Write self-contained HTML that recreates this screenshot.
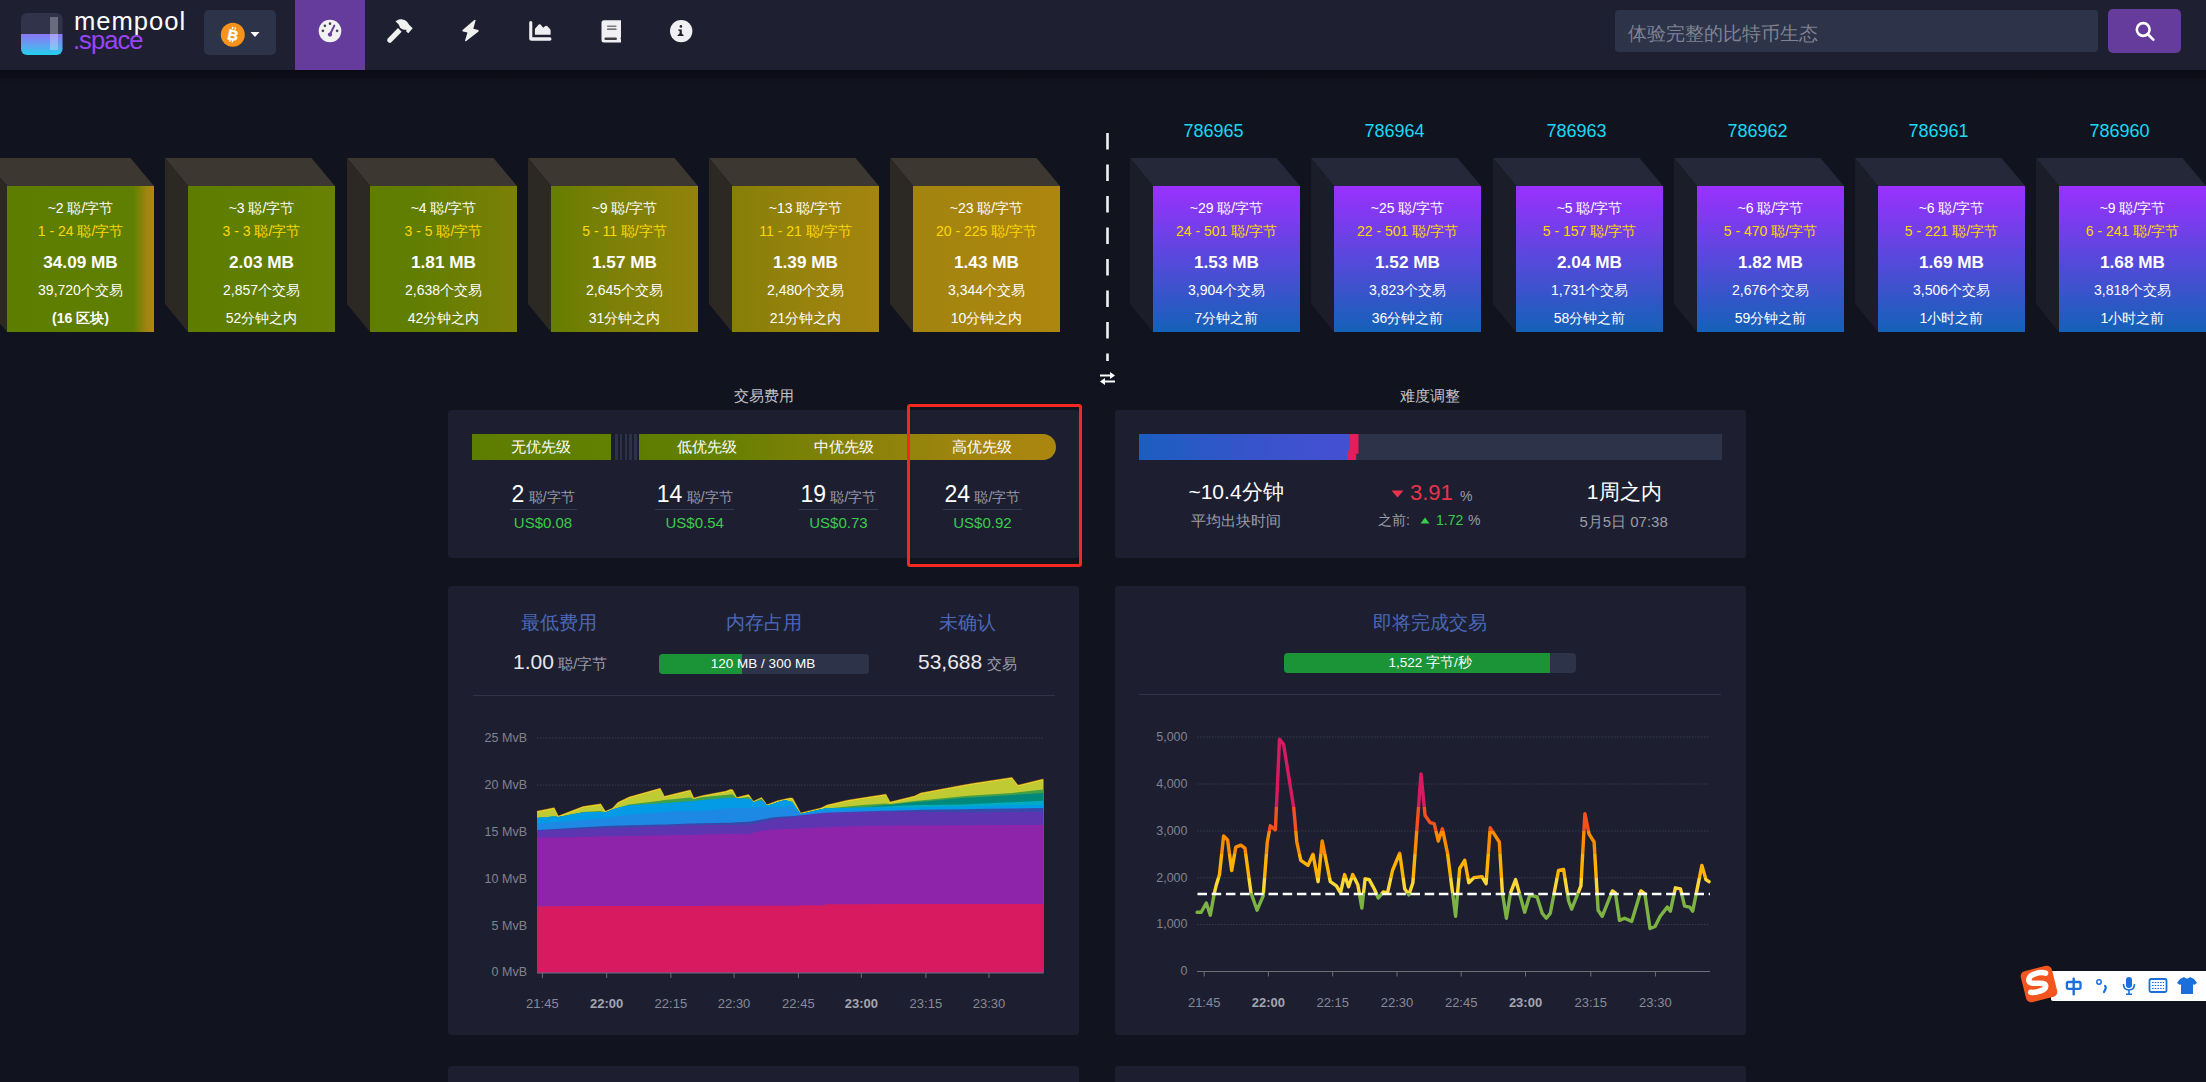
<!DOCTYPE html><html><head><meta charset="utf-8"><style>
*{margin:0;padding:0;box-sizing:border-box}
html,body{width:2206px;height:1082px;overflow:hidden;background:#11131f;font-family:"Liberation Sans",sans-serif;color:#fff}
.a{position:absolute}
.c{position:absolute;text-align:center;white-space:nowrap;line-height:1}
.card{position:absolute;background:#1d1f31;border-radius:3.5px}
</style></head><body>
<div class="a" style="left:0;top:0;width:2206px;height:70px;background:#1e2032"></div><div class="a" style="left:0;top:70px;width:2206px;height:18px;background:linear-gradient(#0a0b15 0%,#0c0d18 40%,#0f111c 55%,#11131f 100%)"></div><svg class="a" style="left:21px;top:13px" width="42" height="42" viewBox="0 0 42 42">
<defs><linearGradient id="lg" x1="0" y1="0" x2="0" y2="1"><stop offset="0" stop-color="#8b76f7"/><stop offset="0.6" stop-color="#5aa7f0"/><stop offset="1" stop-color="#1fd2ee"/></linearGradient>
<clipPath id="lc"><rect x="0" y="0" width="41.5" height="42" rx="6"/></clipPath></defs>
<g clip-path="url(#lc)"><rect x="0" y="0" width="42" height="21" fill="#31334b"/><rect x="0" y="21" width="42" height="21" fill="url(#lg)"/>
<rect x="29" y="4" width="8" height="33" fill="#ffffff" opacity="0.28"/></g></svg><div class="a" style="left:74px;top:9.3px;font-size:25.6px;line-height:25.6px;font-weight:normal;color:#fff;letter-spacing:1px">mempool</div><div class="a" style="left:73px;top:28.3px;font-size:25.6px;line-height:25.6px;color:#9a45f5;letter-spacing:-1px">.space</div><div class="a" style="left:204px;top:10px;width:72px;height:45px;background:#2d3348;border-radius:5px"></div><svg class="a" style="left:220px;top:22px" width="26" height="26" viewBox="0 0 26 26"><circle cx="12.8" cy="12.7" r="12" fill="#f7931a"/>
<g transform="rotate(12 12.8 12.7)"><text x="13" y="18.1" text-anchor="middle" font-family="Liberation Sans" font-weight="bold" font-size="14.5" fill="#fff" stroke="#fff" stroke-width="0.5">B</text><rect x="10.6" y="5" width="1.3" height="2.4" fill="#fff"/><rect x="13.2" y="5" width="1.3" height="2.4" fill="#fff"/><rect x="10.6" y="18" width="1.3" height="2.4" fill="#fff"/><rect x="13.2" y="18" width="1.3" height="2.4" fill="#fff"/></g></svg><svg class="a" style="left:250px;top:31px" width="10" height="7"><path d="M0.5 1 L9.5 1 L5 6 Z" fill="#fff"/></svg><div class="a" style="left:295px;top:0;width:70px;height:70px;background:#653b9c"></div><svg class="a" style="left:318px;top:19px" width="24" height="24" viewBox="0 0 24 24">
<circle cx="12" cy="12" r="11.3" fill="#f2f2f2"/>
<circle cx="12" cy="4.7" r="1.35" fill="#4b4658"/><circle cx="6.9" cy="6.8" r="1.35" fill="#4b4658"/><circle cx="4.9" cy="11.8" r="1.35" fill="#4b4658"/><circle cx="19.1" cy="11.8" r="1.35" fill="#4b4658"/>
<path d="M16.3 6.6 L12.2 15" stroke="#653b9c" stroke-width="2" stroke-linecap="round"/><circle cx="12" cy="15.6" r="2.1" fill="#653b9c"/></svg><svg class="a" style="left:386px;top:18px" width="28" height="26" viewBox="0 0 28 26">
<path d="M2 20.3 L12 10 L15.7 13.7 L5.6 24 Q3.7 25.8 1.9 24.1 Q0.2 22.3 2 20.3 Z" fill="#f0f0ee"/>
<path d="M9.5 3.5 C11.5 1.8 14 1.2 16.3 1.4 C19.5 1.8 22 4 23.1 6.8 L26.7 10.3 L22.3 15.3 L20.2 13.6 L20.5 11.8 C19 11.8 17.5 11.5 16.3 11.2 L14 9.7 C13.5 8 13 6.8 12.3 6 C11.5 5.2 10.5 4.5 9.5 3.5 Z" fill="#f0f0ee"/></svg><svg class="a" style="left:460px;top:19px" width="21" height="24" viewBox="0 0 21 24">
<path d="M14.3 0.9 Q15.7 0.2 15.5 1.8 L13.3 9.8 L18.2 11.1 Q19.3 11.6 18.5 12.6 L6.3 21.9 Q4.8 22.8 5.1 21.2 L7.5 13.6 L2.9 12.4 Q1.6 12 2.6 11 Z" fill="#f0f0ee"/></svg><svg class="a" style="left:528px;top:20px" width="25" height="22" viewBox="0 0 25 22">
<path d="M1.2 2.4 Q1.2 0.9 2.75 0.9 Q4.3 0.9 4.3 2.4 L4.3 17.2 L21.9 17.2 Q23.5 17.2 23.5 18.95 Q23.5 20.7 21.9 20.7 L3.7 20.7 Q1.2 20.7 1.2 18.2 Z" fill="#efeff2"/>
<path d="M6.9 14.8 L6.9 9.6 Q6.9 8.6 7.6 8 L10.8 4.6 Q11.7 3.8 12.6 4.6 L15.2 7.7 L17.3 6 Q18.2 5.3 19.1 6.1 L22 9 Q22.6 9.8 22.6 10.8 L22.6 14.8 Z" fill="#efeff2"/></svg><svg class="a" style="left:600.5px;top:19.5px" width="22" height="24" viewBox="0 0 22 24">
<path d="M3 0.3 L20 0.3 L20 16.8 Q19.2 18.3 20 19.8 L20 22.6 L3 22.6 Q0.5 22.6 0.5 20.1 L0.5 3 Q0.5 0.3 3 0.3 Z" fill="#f0f0f2"/>
<rect x="6" y="5.4" width="9.6" height="1.5" rx="0.7" fill="#7a7a7e"/><rect x="6" y="8.5" width="9.6" height="1.3" rx="0.6" fill="#4a4a50"/>
<rect x="3.4" y="17.4" width="12.6" height="2.6" rx="1.3" fill="#3e3e44"/></svg><svg class="a" style="left:669px;top:19px" width="24" height="24" viewBox="0 0 24 24">
<circle cx="12.2" cy="12.1" r="11.2" fill="#f0f0f2"/><circle cx="11.9" cy="7.4" r="1.3" fill="#202128"/>
<path d="M9.2 10.4 L12.8 10.4 L12.8 14.3 Q13.2 15.6 14.6 16.1 L14.6 17.1 L8.6 17.1 L8.6 16.1 Q10.2 15.6 10.6 14.3 L10.6 12 Q10 11.7 9.2 11.6 Z" fill="#202128"/></svg><div class="a" style="left:1615px;top:10px;width:483px;height:42px;background:#2d3348;border-radius:4px"></div><div class="a" style="left:1628px;top:23.5px;font-size:18.7px;line-height:20px;color:#7e8293;white-space:nowrap">体验完整的比特币生态</div><div class="a" style="left:2108px;top:9px;width:73px;height:44px;background:#653b9c;border-radius:5px"></div><svg class="a" style="left:2134px;top:20px" width="22" height="22" viewBox="0 0 22 22"><circle cx="9.2" cy="9.5" r="6.4" fill="none" stroke="#fff" stroke-width="2.6"/><path d="M13.9 14.3 L19.3 19.6" stroke="#fff" stroke-width="2.7" stroke-linecap="round"/></svg><svg class="a" style="left:-16px;top:158px" width="170" height="174"><polygon points="0,0 146.5,0 170,28 23,28" fill="#3d3731"/><polygon points="0,0 23,28 23,174 0,146" fill="#2c2824"/></svg><div class="a" style="left:7px;top:186px;width:147px;height:146px;background:linear-gradient(to right,#5d7d01 0%,#5f7f02 86%,#a0840f 95%,#b3860f 100%)"></div><div class="c" style="left:0.5px;width:160px;top:200.6px;font-size:14px;height:14px;color:#fff;font-weight:normal">~2 聪/字节</div><div class="c" style="left:0.5px;width:160px;top:223.9px;font-size:14px;height:14px;color:#ffd800;font-weight:normal">1 - 24 聪/字节</div><div class="c" style="left:0.5px;width:160px;top:254.1px;font-size:17.2px;height:17.2px;color:#fff;font-weight:bold">34.09 MB</div><div class="c" style="left:0.5px;width:160px;top:283.3px;font-size:14px;height:14px;color:#fff;font-weight:normal">39,720个交易</div><div class="c" style="left:0.5px;width:160px;top:310.9px;font-size:14px;height:14px;color:#fff;font-weight:bold">(16 区块)</div><svg class="a" style="left:165px;top:158px" width="170" height="174"><polygon points="0,0 146.5,0 170,28 23,28" fill="#3d3731"/><polygon points="0,0 23,28 23,174 0,146" fill="#2c2824"/></svg><div class="a" style="left:188px;top:186px;width:147px;height:146px;background:linear-gradient(to right,#5d7d01 0%,#607e02 60%,#6a8203 100%)"></div><div class="c" style="left:181.5px;width:160px;top:200.6px;font-size:14px;height:14px;color:#fff;font-weight:normal">~3 聪/字节</div><div class="c" style="left:181.5px;width:160px;top:223.9px;font-size:14px;height:14px;color:#ffd800;font-weight:normal">3 - 3 聪/字节</div><div class="c" style="left:181.5px;width:160px;top:254.1px;font-size:17.2px;height:17.2px;color:#fff;font-weight:bold">2.03 MB</div><div class="c" style="left:181.5px;width:160px;top:283.3px;font-size:14px;height:14px;color:#fff;font-weight:normal">2,857个交易</div><div class="c" style="left:181.5px;width:160px;top:310.9px;font-size:14px;height:14px;color:#fff;font-weight:normal">52分钟之内</div><svg class="a" style="left:347px;top:158px" width="170" height="174"><polygon points="0,0 146.5,0 170,28 23,28" fill="#3d3731"/><polygon points="0,0 23,28 23,174 0,146" fill="#2c2824"/></svg><div class="a" style="left:370px;top:186px;width:147px;height:146px;background:linear-gradient(to right,#5e7d01 0%,#5f7e02 30%,#7c8006 100%)"></div><div class="c" style="left:363.5px;width:160px;top:200.6px;font-size:14px;height:14px;color:#fff;font-weight:normal">~4 聪/字节</div><div class="c" style="left:363.5px;width:160px;top:223.9px;font-size:14px;height:14px;color:#ffd800;font-weight:normal">3 - 5 聪/字节</div><div class="c" style="left:363.5px;width:160px;top:254.1px;font-size:17.2px;height:17.2px;color:#fff;font-weight:bold">1.81 MB</div><div class="c" style="left:363.5px;width:160px;top:283.3px;font-size:14px;height:14px;color:#fff;font-weight:normal">2,638个交易</div><div class="c" style="left:363.5px;width:160px;top:310.9px;font-size:14px;height:14px;color:#fff;font-weight:normal">42分钟之内</div><svg class="a" style="left:528px;top:158px" width="170" height="174"><polygon points="0,0 146.5,0 170,28 23,28" fill="#3d3731"/><polygon points="0,0 23,28 23,174 0,146" fill="#2c2824"/></svg><div class="a" style="left:551px;top:186px;width:147px;height:146px;background:linear-gradient(to right,#657e02 0%,#7b8006 40%,#92830b 100%)"></div><div class="c" style="left:544.5px;width:160px;top:200.6px;font-size:14px;height:14px;color:#fff;font-weight:normal">~9 聪/字节</div><div class="c" style="left:544.5px;width:160px;top:223.9px;font-size:14px;height:14px;color:#ffd800;font-weight:normal">5 - 11 聪/字节</div><div class="c" style="left:544.5px;width:160px;top:254.1px;font-size:17.2px;height:17.2px;color:#fff;font-weight:bold">1.57 MB</div><div class="c" style="left:544.5px;width:160px;top:283.3px;font-size:14px;height:14px;color:#fff;font-weight:normal">2,645个交易</div><div class="c" style="left:544.5px;width:160px;top:310.9px;font-size:14px;height:14px;color:#fff;font-weight:normal">31分钟之内</div><svg class="a" style="left:709px;top:158px" width="170" height="174"><polygon points="0,0 146.5,0 170,28 23,28" fill="#3d3731"/><polygon points="0,0 23,28 23,174 0,146" fill="#2c2824"/></svg><div class="a" style="left:732px;top:186px;width:147px;height:146px;background:linear-gradient(to right,#857f08 0%,#94820c 40%,#a4850f 100%)"></div><div class="c" style="left:725.5px;width:160px;top:200.6px;font-size:14px;height:14px;color:#fff;font-weight:normal">~13 聪/字节</div><div class="c" style="left:725.5px;width:160px;top:223.9px;font-size:14px;height:14px;color:#ffd800;font-weight:normal">11 - 21 聪/字节</div><div class="c" style="left:725.5px;width:160px;top:254.1px;font-size:17.2px;height:17.2px;color:#fff;font-weight:bold">1.39 MB</div><div class="c" style="left:725.5px;width:160px;top:283.3px;font-size:14px;height:14px;color:#fff;font-weight:normal">2,480个交易</div><div class="c" style="left:725.5px;width:160px;top:310.9px;font-size:14px;height:14px;color:#fff;font-weight:normal">21分钟之内</div><svg class="a" style="left:890px;top:158px" width="170" height="174"><polygon points="0,0 146.5,0 170,28 23,28" fill="#3d3731"/><polygon points="0,0 23,28 23,174 0,146" fill="#2c2824"/></svg><div class="a" style="left:913px;top:186px;width:147px;height:146px;background:linear-gradient(to right,#a2840f 0%,#a8850f 50%,#ad860f 100%)"></div><div class="c" style="left:906.5px;width:160px;top:200.6px;font-size:14px;height:14px;color:#fff;font-weight:normal">~23 聪/字节</div><div class="c" style="left:906.5px;width:160px;top:223.9px;font-size:14px;height:14px;color:#ffd800;font-weight:normal">20 - 225 聪/字节</div><div class="c" style="left:906.5px;width:160px;top:254.1px;font-size:17.2px;height:17.2px;color:#fff;font-weight:bold">1.43 MB</div><div class="c" style="left:906.5px;width:160px;top:283.3px;font-size:14px;height:14px;color:#fff;font-weight:normal">3,344个交易</div><div class="c" style="left:906.5px;width:160px;top:310.9px;font-size:14px;height:14px;color:#fff;font-weight:normal">10分钟之内</div><svg class="a" style="left:1130px;top:158px" width="170" height="174"><polygon points="0,0 146.5,0 170,28 23,28" fill="#252839"/><polygon points="0,0 23,28 23,174 0,146" fill="#1b1d28"/></svg><div class="a" style="left:1153px;top:186px;width:147px;height:146px;background:linear-gradient(#9b30fe,#1461b8)"></div><div class="c" style="left:1146.5px;width:160px;top:200.6px;font-size:14px;height:14px;color:#fff;font-weight:normal">~29 聪/字节</div><div class="c" style="left:1146.5px;width:160px;top:223.9px;font-size:14px;height:14px;color:#ffd800;font-weight:normal">24 - 501 聪/字节</div><div class="c" style="left:1146.5px;width:160px;top:254.1px;font-size:17.2px;height:17.2px;color:#fff;font-weight:bold">1.53 MB</div><div class="c" style="left:1146.5px;width:160px;top:283.3px;font-size:14px;height:14px;color:#fff;font-weight:normal">3,904个交易</div><div class="c" style="left:1146.5px;width:160px;top:310.9px;font-size:14px;height:14px;color:#fff;font-weight:normal">7分钟之前</div><div class="c" style="left:1153.5px;width:120px;top:122px;font-size:18px;height:18px;color:#1bd8f4">786965</div><svg class="a" style="left:1311px;top:158px" width="170" height="174"><polygon points="0,0 146.5,0 170,28 23,28" fill="#252839"/><polygon points="0,0 23,28 23,174 0,146" fill="#1b1d28"/></svg><div class="a" style="left:1334px;top:186px;width:147px;height:146px;background:linear-gradient(#9b30fe,#1461b8)"></div><div class="c" style="left:1327.5px;width:160px;top:200.6px;font-size:14px;height:14px;color:#fff;font-weight:normal">~25 聪/字节</div><div class="c" style="left:1327.5px;width:160px;top:223.9px;font-size:14px;height:14px;color:#ffd800;font-weight:normal">22 - 501 聪/字节</div><div class="c" style="left:1327.5px;width:160px;top:254.1px;font-size:17.2px;height:17.2px;color:#fff;font-weight:bold">1.52 MB</div><div class="c" style="left:1327.5px;width:160px;top:283.3px;font-size:14px;height:14px;color:#fff;font-weight:normal">3,823个交易</div><div class="c" style="left:1327.5px;width:160px;top:310.9px;font-size:14px;height:14px;color:#fff;font-weight:normal">36分钟之前</div><div class="c" style="left:1334.5px;width:120px;top:122px;font-size:18px;height:18px;color:#1bd8f4">786964</div><svg class="a" style="left:1493px;top:158px" width="170" height="174"><polygon points="0,0 146.5,0 170,28 23,28" fill="#252839"/><polygon points="0,0 23,28 23,174 0,146" fill="#1b1d28"/></svg><div class="a" style="left:1516px;top:186px;width:147px;height:146px;background:linear-gradient(#9b30fe,#1461b8)"></div><div class="c" style="left:1509.5px;width:160px;top:200.6px;font-size:14px;height:14px;color:#fff;font-weight:normal">~5 聪/字节</div><div class="c" style="left:1509.5px;width:160px;top:223.9px;font-size:14px;height:14px;color:#ffd800;font-weight:normal">5 - 157 聪/字节</div><div class="c" style="left:1509.5px;width:160px;top:254.1px;font-size:17.2px;height:17.2px;color:#fff;font-weight:bold">2.04 MB</div><div class="c" style="left:1509.5px;width:160px;top:283.3px;font-size:14px;height:14px;color:#fff;font-weight:normal">1,731个交易</div><div class="c" style="left:1509.5px;width:160px;top:310.9px;font-size:14px;height:14px;color:#fff;font-weight:normal">58分钟之前</div><div class="c" style="left:1516.5px;width:120px;top:122px;font-size:18px;height:18px;color:#1bd8f4">786963</div><svg class="a" style="left:1674px;top:158px" width="170" height="174"><polygon points="0,0 146.5,0 170,28 23,28" fill="#252839"/><polygon points="0,0 23,28 23,174 0,146" fill="#1b1d28"/></svg><div class="a" style="left:1697px;top:186px;width:147px;height:146px;background:linear-gradient(#9b30fe,#1461b8)"></div><div class="c" style="left:1690.5px;width:160px;top:200.6px;font-size:14px;height:14px;color:#fff;font-weight:normal">~6 聪/字节</div><div class="c" style="left:1690.5px;width:160px;top:223.9px;font-size:14px;height:14px;color:#ffd800;font-weight:normal">5 - 470 聪/字节</div><div class="c" style="left:1690.5px;width:160px;top:254.1px;font-size:17.2px;height:17.2px;color:#fff;font-weight:bold">1.82 MB</div><div class="c" style="left:1690.5px;width:160px;top:283.3px;font-size:14px;height:14px;color:#fff;font-weight:normal">2,676个交易</div><div class="c" style="left:1690.5px;width:160px;top:310.9px;font-size:14px;height:14px;color:#fff;font-weight:normal">59分钟之前</div><div class="c" style="left:1697.5px;width:120px;top:122px;font-size:18px;height:18px;color:#1bd8f4">786962</div><svg class="a" style="left:1855px;top:158px" width="170" height="174"><polygon points="0,0 146.5,0 170,28 23,28" fill="#252839"/><polygon points="0,0 23,28 23,174 0,146" fill="#1b1d28"/></svg><div class="a" style="left:1878px;top:186px;width:147px;height:146px;background:linear-gradient(#9b30fe,#1461b8)"></div><div class="c" style="left:1871.5px;width:160px;top:200.6px;font-size:14px;height:14px;color:#fff;font-weight:normal">~6 聪/字节</div><div class="c" style="left:1871.5px;width:160px;top:223.9px;font-size:14px;height:14px;color:#ffd800;font-weight:normal">5 - 221 聪/字节</div><div class="c" style="left:1871.5px;width:160px;top:254.1px;font-size:17.2px;height:17.2px;color:#fff;font-weight:bold">1.69 MB</div><div class="c" style="left:1871.5px;width:160px;top:283.3px;font-size:14px;height:14px;color:#fff;font-weight:normal">3,506个交易</div><div class="c" style="left:1871.5px;width:160px;top:310.9px;font-size:14px;height:14px;color:#fff;font-weight:normal">1小时之前</div><div class="c" style="left:1878.5px;width:120px;top:122px;font-size:18px;height:18px;color:#1bd8f4">786961</div><svg class="a" style="left:2036px;top:158px" width="170" height="174"><polygon points="0,0 146.5,0 170,28 23,28" fill="#252839"/><polygon points="0,0 23,28 23,174 0,146" fill="#1b1d28"/></svg><div class="a" style="left:2059px;top:186px;width:147px;height:146px;background:linear-gradient(#9b30fe,#1461b8)"></div><div class="c" style="left:2052.5px;width:160px;top:200.6px;font-size:14px;height:14px;color:#fff;font-weight:normal">~9 聪/字节</div><div class="c" style="left:2052.5px;width:160px;top:223.9px;font-size:14px;height:14px;color:#ffd800;font-weight:normal">6 - 241 聪/字节</div><div class="c" style="left:2052.5px;width:160px;top:254.1px;font-size:17.2px;height:17.2px;color:#fff;font-weight:bold">1.68 MB</div><div class="c" style="left:2052.5px;width:160px;top:283.3px;font-size:14px;height:14px;color:#fff;font-weight:normal">3,818个交易</div><div class="c" style="left:2052.5px;width:160px;top:310.9px;font-size:14px;height:14px;color:#fff;font-weight:normal">1小时之前</div><div class="c" style="left:2059.5px;width:120px;top:122px;font-size:18px;height:18px;color:#1bd8f4">786960</div><svg class="a" style="left:1105px;top:130px" width="5" height="235"><line x1="2.5" y1="3" x2="2.5" y2="231" stroke="#f2f2f2" stroke-width="2.6" stroke-dasharray="16.5 15"/></svg><svg class="a" style="left:1099px;top:370.5px" width="17" height="15" viewBox="0 0 17 15"><path d="M1 4.5 L13 4.5" stroke="#fff" stroke-width="2"/><path d="M11 1 L16 4.5 L11 8 Z" fill="#fff"/><path d="M4 10.5 L16 10.5" stroke="#fff" stroke-width="2"/><path d="M6 7 L1 10.5 L6 14 Z" fill="#fff"/></svg><div class="c" style="left:613.6px;width:300px;top:387.5px;height:15px;font-size:15px;color:#c2c3cb;font-weight:normal;">交易费用</div><div class="card" style="left:448px;top:410px;width:631px;height:148px"></div><div class="a" style="left:472px;top:434px;width:139px;height:26px;background:linear-gradient(to right,#5d7d01,#628002)"></div><div class="a" style="left:611px;top:434px;width:27.5px;height:26px;background:linear-gradient(90deg,#1b1d2e 0px,#1b1d2e 3.7px,#2c3247 3.7px,#2c3247 6.9px,#1b1d2e 6.9px,#1b1d2e 8.8px,#2c3247 8.8px,#2c3247 11.4px,#1b1d2e 11.4px,#1b1d2e 13.6px,#2c3247 13.6px,#2c3247 16.4px,#1b1d2e 16.4px,#1b1d2e 18px,#2c3247 18px,#2c3247 20.9px,#1b1d2e 20.9px,#1b1d2e 22.8px,#2c3247 22.8px,#2c3247 26px,#1b1d2e 26px,#1b1d2e 27.5px)"></div><div class="a" style="left:638.5px;top:434px;width:417px;height:26px;border-radius:0 13px 13px 0;background:linear-gradient(to right,#5d7d01 0%,#668002 20%,#8a820a 55%,#a2850f 80%,#ab860f 100%)"></div><div class="c" style="left:390.5px;width:300px;top:439.0px;height:15px;font-size:15px;color:#fff;font-weight:normal;">无优先级</div><div class="c" style="left:556.6px;width:300px;top:439.0px;height:15px;font-size:15px;color:#fff;font-weight:normal;">低优先级</div><div class="c" style="left:694.4px;width:300px;top:439.0px;height:15px;font-size:15px;color:#fff;font-weight:normal;">中优先级</div><div class="c" style="left:832.0px;width:300px;top:439.0px;height:15px;font-size:15px;color:#fff;font-weight:normal;">高优先级</div><div class="c" style="left:443px;width:200px;top:482px;height:24px;line-height:24px"><span style="font-size:23px;color:#fff">2</span> <span style="font-size:14px;color:#9a9ca8">聪/字节</span></div><div class="a" style="left:509.5px;top:509px;width:67px;height:1px;background:#363a4f"></div><div class="c" style="left:393.0px;width:300px;top:515.1px;height:15px;font-size:15px;color:#3bcc49;font-weight:normal;">US$0.08</div><div class="c" style="left:594.7px;width:200px;top:482px;height:24px;line-height:24px"><span style="font-size:23px;color:#fff">14</span> <span style="font-size:14px;color:#9a9ca8">聪/字节</span></div><div class="a" style="left:655.2px;top:509px;width:79px;height:1px;background:#363a4f"></div><div class="c" style="left:544.7px;width:300px;top:515.1px;height:15px;font-size:15px;color:#3bcc49;font-weight:normal;">US$0.54</div><div class="c" style="left:738.4px;width:200px;top:482px;height:24px;line-height:24px"><span style="font-size:23px;color:#fff">19</span> <span style="font-size:14px;color:#9a9ca8">聪/字节</span></div><div class="a" style="left:798.9px;top:509px;width:79px;height:1px;background:#363a4f"></div><div class="c" style="left:688.4px;width:300px;top:515.1px;height:15px;font-size:15px;color:#3bcc49;font-weight:normal;">US$0.73</div><div class="c" style="left:882.4px;width:200px;top:482px;height:24px;line-height:24px"><span style="font-size:23px;color:#fff">24</span> <span style="font-size:14px;color:#9a9ca8">聪/字节</span></div><div class="a" style="left:942.9px;top:509px;width:79px;height:1px;background:#363a4f"></div><div class="c" style="left:832.4px;width:300px;top:515.1px;height:15px;font-size:15px;color:#3bcc49;font-weight:normal;">US$0.92</div><div class="a" style="left:907px;top:404px;width:175px;height:163px;border:3px solid #f3291f;border-radius:3px"></div><div class="c" style="left:1280.0px;width:300px;top:387.5px;height:15px;font-size:15px;color:#c2c3cb;font-weight:normal;">难度调整</div><div class="card" style="left:1115px;top:410px;width:631px;height:148px"></div><div class="a" style="left:1139px;top:434px;width:582.5px;height:26px;background:#2d3348"></div><div class="a" style="left:1139px;top:434px;width:211px;height:26px;background:linear-gradient(to right,#1b5ec0,#3a53cc 60%,#4450d2)"></div><svg class="a" style="left:1340px;top:434px" width="25" height="26"><polygon points="10,0 18.5,0 18.5,19.7 16.2,19.7 16.2,26 7,26 7,19 10,15" fill="#e41d5b"/></svg><div class="c" style="left:1086.0px;width:300px;top:480.5px;height:21px;font-size:21px;color:#fff;font-weight:normal;">~10.4分钟</div><div class="c" style="left:1086.4px;width:300px;top:513.0px;height:15px;font-size:15px;color:#9a9ca8;font-weight:normal;">平均出块时间</div><svg class="a" style="left:1391px;top:490px" width="13" height="8"><path d="M0.5 0.5 L12.5 0.5 L6.5 7.5 Z" fill="#e8334b"/></svg><div class="a" style="left:1410px;top:481px;font-size:22px;line-height:24px;color:#e8334b;white-space:nowrap">3.91</div><div class="a" style="left:1460px;top:489px;font-size:14px;line-height:14px;color:#9a9ca8">%</div><div class="a" style="left:1378px;top:513px;font-size:14px;line-height:15px;color:#9a9ca8;white-space:nowrap">之前:</div><svg class="a" style="left:1420px;top:517px" width="10" height="7"><path d="M0.5 6.5 L9.5 6.5 L5 0.5 Z" fill="#3bcc49"/></svg><div class="a" style="left:1436px;top:513px;font-size:14px;line-height:15px;color:#3bcc49;white-space:nowrap">1.72</div><div class="a" style="left:1468px;top:513px;font-size:14px;line-height:15px;color:#9a9ca8">%</div><div class="c" style="left:1474.2px;width:300px;top:480.5px;height:21px;font-size:21px;color:#fff;font-weight:normal;">1周之内</div><div class="c" style="left:1473.6px;width:300px;top:513.5px;height:15px;font-size:15px;color:#9a9ca8;font-weight:normal;">5月5日 07:38</div><div class="card" style="left:448px;top:586px;width:631px;height:449px"></div><div class="card" style="left:1115px;top:586px;width:631px;height:449px"></div><div class="card" style="left:448px;top:1066px;width:631px;height:40px"></div><div class="card" style="left:1115px;top:1066px;width:631px;height:40px"></div><div class="c" style="left:409.0px;width:300px;top:613.75px;height:18.5px;font-size:18.5px;color:#4a68b9;font-weight:normal;">最低费用</div><div class="c" style="left:614.2px;width:300px;top:613.75px;height:18.5px;font-size:18.5px;color:#4a68b9;font-weight:normal;">内存占用</div><div class="c" style="left:817.0px;width:300px;top:613.75px;height:18.5px;font-size:18.5px;color:#4a68b9;font-weight:normal;">未确认</div><div class="c" style="left:1280.0px;width:300px;top:613.75px;height:18.5px;font-size:18.5px;color:#4a68b9;font-weight:normal;">即将完成交易</div><div class="a" style="left:513px;top:651px;white-space:nowrap;line-height:22px"><span style="font-size:21px;color:#e8e8ec">1.00</span> <span style="font-size:15px;color:#9a9ca8">聪/字节</span></div><div class="a" style="left:659px;top:654px;width:210px;height:20px;background:#2d3348;border-radius:4px;overflow:hidden"><div style="width:83px;height:20px;background:#1a9436"></div></div><div class="c" style="left:613.0px;width:300px;top:656.75px;height:13.5px;font-size:13.5px;color:#fff;font-weight:normal;">120 MB / 300 MB</div><div class="a" style="left:918px;top:651px;white-space:nowrap;line-height:22px"><span style="font-size:21px;color:#e8e8ec">53,688</span> <span style="font-size:15px;color:#9a9ca8">交易</span></div><div class="a" style="left:473px;top:695px;width:582px;height:1px;background:#303347"></div><div class="a" style="left:1284px;top:653px;width:292px;height:20px;background:#2d3348;border-radius:4px;overflow:hidden"><div style="width:266px;height:20px;background:#1a9436"></div></div><div class="c" style="left:1280.2px;width:300px;top:655.75px;height:13.5px;font-size:13.5px;color:#fff;font-weight:normal;">1,522 字节/秒</div><div class="a" style="left:1139px;top:694px;width:582px;height:1px;background:#303347"></div><svg class="a" style="left:0;top:0" width="2206" height="1082"><line x1="537" y1="738.1" x2="1043.5" y2="738.1" stroke="#393c4f" stroke-width="1" stroke-dasharray="1.5 1.5"/><line x1="537" y1="785.1" x2="1043.5" y2="785.1" stroke="#393c4f" stroke-width="1" stroke-dasharray="1.5 1.5"/><line x1="537" y1="832" x2="1043.5" y2="832" stroke="#393c4f" stroke-width="1" stroke-dasharray="1.5 1.5"/><line x1="537" y1="879" x2="1043.5" y2="879" stroke="#393c4f" stroke-width="1" stroke-dasharray="1.5 1.5"/><line x1="537" y1="926" x2="1043.5" y2="926" stroke="#393c4f" stroke-width="1" stroke-dasharray="1.5 1.5"/><line x1="1197" y1="737" x2="1710" y2="737" stroke="#393c4f" stroke-width="1" stroke-dasharray="1.5 1.5"/><line x1="1197" y1="784" x2="1710" y2="784" stroke="#393c4f" stroke-width="1" stroke-dasharray="1.5 1.5"/><line x1="1197" y1="831" x2="1710" y2="831" stroke="#393c4f" stroke-width="1" stroke-dasharray="1.5 1.5"/><line x1="1197" y1="877.8" x2="1710" y2="877.8" stroke="#393c4f" stroke-width="1" stroke-dasharray="1.5 1.5"/><line x1="1197" y1="924.6" x2="1710" y2="924.6" stroke="#393c4f" stroke-width="1" stroke-dasharray="1.5 1.5"/><path d="M537.0,811.3 L554.2,807.7 L558.3,816.0 L583.0,806.6 L600.3,803.9 L600.7,803.8 L605.4,811.3 L612.5,808.3 L617.8,802.4 L624.0,799.5 L629.0,797.1 L660.2,788.3 L664.4,796.3 L664.8,796.2 L690.3,790.0 L693.8,798.0 L700.0,796.3 L703.2,795.4 L725.6,791.2 L730.0,789.6 L730.4,789.5 L732.7,789.7 L736.8,797.5 L748.6,794.5 L750.4,797.1 L751.3,798.3 L753.3,801.2 L753.9,800.9 L761.6,797.5 L764.6,801.6 L766.9,804.8 L774.2,802.0 L777.5,800.7 L785.0,799.1 L790.0,798.0 L792.0,798.1 L792.2,798.2 L792.8,798.2 L800.6,812.9 L821.0,808.0 L823.0,807.0 L824.6,806.2 L826.0,805.5 L827.0,805.0 L847.5,800.2 L863.1,797.8 L885.9,794.2 L890.1,802.0 L914.7,796.0 L917.1,794.8 L920.7,793.0 L965.2,784.7 L972.4,783.4 L1012.0,777.4 L1018.0,785.2 L1043.3,779.0 L1043.3,972.5 L537.0,972.5 Z" fill="#FDD835"/><path d="M537.0,812.3 L554.2,808.7 L558.3,817.0 L583.0,807.6 L600.3,804.9 L600.7,804.8 L605.4,812.3 L612.5,809.3 L617.8,803.4 L624.0,800.5 L629.0,798.1 L660.2,789.3 L664.4,797.3 L664.8,797.2 L690.3,791.0 L693.8,799.0 L700.0,797.3 L703.2,796.4 L725.6,792.2 L730.0,790.6 L730.4,790.5 L732.7,790.7 L736.8,798.5 L748.6,795.5 L750.4,798.1 L751.3,799.3 L753.3,802.2 L753.9,801.9 L761.6,798.5 L764.6,802.6 L766.9,805.8 L774.2,803.0 L777.5,801.7 L785.0,800.1 L790.0,799.0 L792.0,799.1 L792.2,799.2 L792.8,799.2 L800.6,813.9 L821.0,809.0 L823.0,808.0 L824.6,807.2 L826.0,806.5 L827.0,806.0 L847.5,801.2 L863.1,798.8 L885.9,795.2 L890.1,803.0 L914.7,797.0 L917.1,795.8 L920.7,794.0 L965.2,785.7 L972.4,784.4 L1012.0,778.4 L1018.0,786.2 L1043.3,780.0 L1043.3,972.5 L537.0,972.5 Z" fill="#C0CA33"/><path d="M537.0,817.7 L554.2,816.6 L558.3,817.0 L583.0,811.9 L600.3,810.9 L600.7,810.9 L605.4,812.3 L612.5,809.4 L617.8,807.7 L624.0,805.9 L629.0,804.5 L660.2,800.7 L664.4,800.0 L664.8,800.0 L690.3,797.5 L693.8,799.0 L700.0,797.5 L703.2,797.1 L725.6,794.9 L730.0,794.5 L730.4,794.4 L732.7,794.2 L736.8,798.5 L748.6,797.1 L750.4,798.5 L751.3,799.3 L753.3,802.2 L753.9,801.9 L761.6,798.5 L764.6,802.6 L766.9,805.8 L774.2,803.4 L777.5,802.2 L785.0,800.1 L790.0,801.4 L792.0,802.1 L792.2,802.2 L792.8,803.0 L800.6,813.9 L821.0,809.3 L823.0,808.9 L824.6,808.6 L826.0,808.5 L827.0,808.4 L847.5,806.5 L863.1,805.0 L885.9,803.5 L890.1,804.0 L914.7,801.1 L917.1,800.8 L920.7,800.4 L965.2,796.0 L972.4,795.5 L1012.0,793.0 L1018.0,792.3 L1043.3,789.4 L1043.3,972.5 L537.0,972.5 Z" fill="#43A047"/><path d="M537.0,818.0 L554.2,816.6 L558.3,817.0 L583.0,812.4 L600.3,811.9 L600.7,811.9 L605.4,812.3 L612.5,809.4 L617.8,808.0 L624.0,806.5 L629.0,805.4 L660.2,803.6 L664.4,803.3 L664.8,803.2 L690.3,801.2 L693.8,800.9 L700.0,800.4 L703.2,800.1 L725.6,798.3 L730.0,797.9 L730.4,797.9 L732.7,797.7 L736.8,798.5 L748.6,798.9 L750.4,799.1 L751.3,799.3 L753.3,802.2 L753.9,801.9 L761.6,800.6 L764.6,802.6 L766.9,805.8 L774.2,803.4 L777.5,802.2 L785.0,800.1 L790.0,801.4 L792.0,802.1 L792.2,802.2 L792.8,803.0 L800.6,813.9 L821.0,809.3 L823.0,808.9 L824.6,808.6 L826.0,808.6 L827.0,808.5 L847.5,807.9 L863.1,807.4 L885.9,805.1 L890.1,804.7 L914.7,802.2 L917.1,802.0 L920.7,801.7 L965.2,797.8 L972.4,797.4 L1012.0,794.9 L1018.0,794.6 L1043.3,793.0 L1043.3,972.5 L537.0,972.5 Z" fill="#00897B"/><path d="M537.0,818.0 L554.2,816.6 L558.3,817.0 L583.0,812.4 L600.3,811.9 L600.7,811.9 L605.4,812.3 L612.5,809.4 L617.8,808.0 L624.0,806.5 L629.0,805.4 L660.2,803.6 L664.4,803.3 L664.8,803.2 L690.3,801.2 L693.8,800.9 L700.0,800.4 L703.2,800.1 L725.6,798.3 L730.0,797.9 L730.4,797.9 L732.7,797.7 L736.8,798.5 L748.6,798.9 L750.4,799.1 L751.3,799.3 L753.3,802.2 L753.9,801.9 L761.6,800.6 L764.6,802.6 L766.9,805.8 L774.2,803.4 L777.5,802.2 L785.0,800.1 L790.0,801.4 L792.0,802.1 L792.2,802.2 L792.8,803.0 L800.6,813.9 L821.0,809.3 L823.0,808.9 L824.6,808.6 L826.0,808.6 L827.0,808.5 L847.5,807.9 L863.1,807.4 L885.9,806.4 L890.1,806.2 L914.7,805.1 L917.1,805.0 L920.7,805.0 L965.2,804.4 L972.4,804.1 L1012.0,802.2 L1018.0,802.0 L1043.3,800.8 L1043.3,972.5 L537.0,972.5 Z" fill="#00ACC1"/><path d="M537.0,818.0 L554.2,816.6 L558.3,817.0 L583.0,812.4 L600.3,811.9 L600.7,811.9 L605.4,812.3 L612.5,809.4 L617.8,808.0 L624.0,806.5 L629.0,805.4 L660.2,803.6 L664.4,803.3 L664.8,803.2 L690.3,801.2 L693.8,800.9 L700.0,800.4 L703.2,800.1 L725.6,798.3 L730.0,797.9 L730.4,797.9 L732.7,797.7 L736.8,798.5 L748.6,798.9 L750.4,799.1 L751.3,799.3 L753.3,802.2 L753.9,801.9 L761.6,800.6 L764.6,802.6 L766.9,805.8 L774.2,803.4 L777.5,802.2 L785.0,800.1 L790.0,801.4 L792.0,802.1 L792.2,802.2 L792.8,803.0 L800.6,813.9 L821.0,809.3 L823.0,808.9 L824.6,808.6 L826.0,808.6 L827.0,808.5 L847.5,807.9 L863.1,807.4 L885.9,807.4 L890.1,807.4 L914.7,807.4 L917.1,807.4 L920.7,807.3 L965.2,806.2 L972.4,806.0 L1012.0,805.1 L1018.0,805.0 L1043.3,804.4 L1043.3,972.5 L537.0,972.5 Z" fill="#039BE5"/><path d="M537.0,823.6 L554.2,822.3 L558.3,822.0 L583.0,820.1 L600.3,818.5 L600.7,818.4 L605.4,817.8 L612.5,816.9 L617.8,816.2 L624.0,815.4 L629.0,814.8 L660.2,812.4 L664.4,811.9 L664.8,811.9 L690.3,810.7 L693.8,810.9 L700.0,811.3 L703.2,811.0 L725.6,808.7 L730.0,808.2 L730.4,808.2 L732.7,808.1 L736.8,808.0 L748.6,807.7 L750.4,807.6 L751.3,807.6 L753.3,807.5 L753.9,807.5 L761.6,807.1 L764.6,807.0 L766.9,807.1 L774.2,807.6 L777.5,807.4 L785.0,806.9 L790.0,806.5 L792.0,806.4 L792.2,806.4 L792.8,806.9 L800.6,814.0 L821.0,811.5 L823.0,811.2 L824.6,811.0 L826.0,811.0 L827.0,810.9 L847.5,810.3 L863.1,809.9 L885.9,809.9 L890.1,809.9 L914.7,809.9 L917.1,809.9 L920.7,809.8 L965.2,809.2 L972.4,809.1 L1012.0,808.5 L1018.0,808.4 L1043.3,808.0 L1043.3,972.5 L537.0,972.5 Z" fill="#1E88E5"/><path d="M537.0,830.1 L554.2,829.0 L558.3,828.8 L583.0,827.2 L600.3,826.3 L600.7,826.3 L605.4,826.1 L612.5,825.8 L617.8,825.6 L624.0,825.4 L629.0,825.3 L660.2,824.6 L664.4,824.5 L664.8,824.5 L690.3,823.6 L693.8,823.5 L700.0,823.3 L703.2,823.2 L725.6,822.8 L730.0,822.7 L730.4,822.7 L732.7,822.5 L736.8,822.3 L748.6,821.7 L750.4,821.6 L751.3,821.5 L753.3,821.1 L753.9,821.0 L761.6,819.6 L764.6,819.0 L766.9,818.6 L774.2,817.3 L777.5,817.1 L785.0,816.5 L790.0,816.2 L792.0,816.0 L792.2,816.0 L792.8,815.9 L800.6,815.2 L821.0,813.2 L823.0,813.0 L824.6,812.8 L826.0,812.8 L827.0,812.7 L847.5,812.0 L863.1,811.5 L885.9,810.8 L890.1,810.7 L914.7,810.0 L917.1,809.9 L920.7,809.8 L965.2,809.2 L972.4,809.1 L1012.0,808.5 L1018.0,808.4 L1043.3,808.0 L1043.3,972.5 L537.0,972.5 Z" fill="#3949AB"/><path d="M537.0,830.7 L554.2,830.1 L558.3,829.9 L583.0,829.0 L600.3,828.4 L600.7,828.4 L605.4,828.2 L612.5,828.0 L617.8,827.8 L624.0,827.6 L629.0,827.4 L660.2,826.4 L664.4,826.2 L664.8,826.2 L690.3,825.3 L693.8,825.2 L700.0,825.0 L703.2,825.0 L725.6,824.9 L730.0,824.9 L730.4,824.9 L732.7,824.9 L736.8,824.9 L748.6,824.8 L750.4,824.8 L751.3,824.6 L753.3,824.1 L753.9,824.0 L761.6,822.2 L764.6,821.5 L766.9,821.0 L774.2,819.3 L777.5,818.5 L785.0,817.9 L790.0,817.5 L792.0,817.3 L792.2,817.3 L792.8,817.2 L800.6,815.8 L821.0,813.4 L823.0,813.2 L824.6,813.0 L826.0,813.0 L827.0,813.0 L847.5,812.5 L863.1,812.2 L885.9,812.0 L890.1,812.0 L914.7,811.7 L917.1,811.7 L920.7,811.8 L965.2,812.5 L972.4,812.4 L1012.0,812.0 L1018.0,812.0 L1043.3,811.7 L1043.3,972.5 L537.0,972.5 Z" fill="#5E35B1"/><path d="M537.0,837.8 L554.2,837.4 L558.3,837.4 L583.0,836.9 L600.3,836.5 L600.7,836.5 L605.4,836.4 L612.5,836.3 L617.8,836.2 L624.0,836.1 L629.0,836.0 L660.2,835.4 L664.4,835.3 L664.8,835.3 L690.3,834.9 L693.8,834.8 L700.0,834.7 L703.2,834.6 L725.6,834.1 L730.0,834.0 L730.4,834.0 L732.7,834.0 L736.8,834.1 L748.6,834.2 L750.4,834.2 L751.3,833.8 L753.3,832.8 L753.9,832.5 L761.6,831.1 L764.6,830.5 L766.9,830.2 L774.2,829.3 L777.5,829.2 L785.0,829.1 L790.0,829.0 L792.0,828.9 L792.2,828.9 L792.8,828.9 L800.6,828.5 L821.0,827.5 L823.0,827.4 L824.6,827.3 L826.0,827.3 L827.0,827.2 L847.5,826.6 L863.1,826.1 L885.9,825.8 L890.1,825.8 L914.7,825.5 L917.1,825.5 L920.7,825.5 L965.2,825.3 L972.4,825.2 L1012.0,825.0 L1018.0,825.0 L1043.3,824.9 L1043.3,972.5 L537.0,972.5 Z" fill="#8E24AA"/><path d="M537.0,906.2 L554.2,906.2 L558.3,906.2 L583.0,906.1 L600.3,906.1 L600.7,906.1 L605.4,906.1 L612.5,906.0 L617.8,906.0 L624.0,906.0 L629.0,906.0 L660.2,905.9 L664.4,905.9 L664.8,905.9 L690.3,905.9 L693.8,905.9 L700.0,905.9 L703.2,905.9 L725.6,905.8 L730.0,905.8 L730.4,905.8 L732.7,905.8 L736.8,905.8 L748.6,905.8 L750.4,905.8 L751.3,905.8 L753.3,905.7 L753.9,905.7 L761.6,905.7 L764.6,905.7 L766.9,905.7 L774.2,905.7 L777.5,905.7 L785.0,905.7 L790.0,905.7 L792.0,905.7 L792.2,905.7 L792.8,905.7 L800.6,905.6 L821.0,905.6 L823.0,905.6 L824.6,904.9 L826.0,904.2 L827.0,904.2 L847.5,904.2 L863.1,904.2 L885.9,904.1 L890.1,904.1 L914.7,904.1 L917.1,904.1 L920.7,904.1 L965.2,904.1 L972.4,904.1 L1012.0,904.0 L1018.0,904.0 L1043.3,904.0 L1043.3,972.5 L537.0,972.5 Z" fill="#D81B60"/><path d="M536.8,811.3 L554.2,807.7 L558.3,816.0 L583.0,806.6 L600.7,803.8 L605.4,811.3 L612.5,808.3 L617.8,802.4 L629.0,797.1 L660.2,788.3 L664.4,796.3 L690.3,790.0 L693.8,798.0 L703.2,795.4 L725.6,791.2 L730.4,789.5 L732.7,789.7 L736.8,797.5 L748.6,794.5 L753.3,801.2 L761.6,797.5 L766.9,804.8 L777.5,800.7 L790.0,798.0 L792.8,798.2 L800.6,812.9 L821.0,808.0 L827.0,805.0 L847.5,800.2 L885.9,794.2 L890.1,802.0 L914.7,796.0 L920.7,793.0 L972.4,783.4 L1012.0,777.4 L1018.0,785.2 L1043.3,779.0" fill="none" stroke="#FFB300" stroke-width="0.8" opacity="0.5"/><line x1="537" y1="973" x2="1043.5" y2="973" stroke="#6e7079" stroke-width="1"/><line x1="542.4" y1="973" x2="542.4" y2="978" stroke="#6e7079" stroke-width="1"/><line x1="606.7" y1="973" x2="606.7" y2="978" stroke="#6e7079" stroke-width="1"/><line x1="670.9" y1="973" x2="670.9" y2="978" stroke="#6e7079" stroke-width="1"/><line x1="734.1" y1="973" x2="734.1" y2="978" stroke="#6e7079" stroke-width="1"/><line x1="798.4" y1="973" x2="798.4" y2="978" stroke="#6e7079" stroke-width="1"/><line x1="861.3" y1="973" x2="861.3" y2="978" stroke="#6e7079" stroke-width="1"/><line x1="925.9" y1="973" x2="925.9" y2="978" stroke="#6e7079" stroke-width="1"/><line x1="989" y1="973" x2="989" y2="978" stroke="#6e7079" stroke-width="1"/><line x1="1197" y1="971.5" x2="1710" y2="971.5" stroke="#6e7079" stroke-width="1"/><line x1="1204.2" y1="971.5" x2="1204.2" y2="976.5" stroke="#6e7079" stroke-width="1"/><line x1="1268.4" y1="971.5" x2="1268.4" y2="976.5" stroke="#6e7079" stroke-width="1"/><line x1="1332.7" y1="971.5" x2="1332.7" y2="976.5" stroke="#6e7079" stroke-width="1"/><line x1="1397" y1="971.5" x2="1397" y2="976.5" stroke="#6e7079" stroke-width="1"/><line x1="1461.2" y1="971.5" x2="1461.2" y2="976.5" stroke="#6e7079" stroke-width="1"/><line x1="1525.5" y1="971.5" x2="1525.5" y2="976.5" stroke="#6e7079" stroke-width="1"/><line x1="1590.8" y1="971.5" x2="1590.8" y2="976.5" stroke="#6e7079" stroke-width="1"/><line x1="1655.4" y1="971.5" x2="1655.4" y2="976.5" stroke="#6e7079" stroke-width="1"/><defs><linearGradient id="vm" gradientUnits="userSpaceOnUse" x1="0" y1="720" x2="0" y2="980"><stop offset="0.0000" stop-color="#D81B60"/><stop offset="0.3358" stop-color="#D81B60"/><stop offset="0.3358" stop-color="#F4511E"/><stop offset="0.4258" stop-color="#F4511E"/><stop offset="0.4258" stop-color="#FB8C00"/><stop offset="0.5158" stop-color="#FB8C00"/><stop offset="0.5158" stop-color="#FFB300"/><stop offset="0.6058" stop-color="#FFB300"/><stop offset="0.6058" stop-color="#FDD835"/><stop offset="0.6658" stop-color="#FDD835"/><stop offset="0.6658" stop-color="#7CB342"/><stop offset="1.0000" stop-color="#7CB342"/></linearGradient></defs><path d="M1197.1,912.2 L1201.2,912.2 L1206.3,903.0 L1210.3,915.2 L1214.4,892.9 L1216.4,884.7 L1219.5,874.6 L1223.6,835.9 L1227.6,840.0 L1231.7,870.5 L1235.8,847.1 L1240.8,845.1 L1244.9,848.1 L1251.0,892.9 L1257.1,910.2 L1263.2,895.9 L1267.3,842.0 L1270.3,825.8 L1275.4,829.8 L1279.5,739.3 L1283.6,744.4 L1293.7,807.5 L1296.8,842.0 L1300.8,860.3 L1308.0,865.4 L1313.0,854.2 L1318.1,881.7 L1322.2,841.0 L1330.3,881.7 L1336.4,885.8 L1340.5,892.9 L1344.6,874.6 L1348.6,886.8 L1352.7,874.6 L1357.8,884.7 L1361.9,908.1 L1365.1,878.6 L1369.2,879.6 L1374.2,888.8 L1378.3,898.0 L1383.4,891.9 L1387.5,892.9 L1392.5,870.5 L1399.7,853.2 L1404.7,888.8 L1408.8,894.9 L1412.9,882.7 L1421.0,773.9 L1425.1,815.6 L1430.2,822.7 L1434.2,823.7 L1438.3,841.0 L1442.4,828.8 L1447.5,853.2 L1455.6,916.3 L1459.7,868.5 L1464.7,860.3 L1468.8,882.7 L1473.9,877.6 L1482.0,876.6 L1486.1,883.7 L1490.2,827.8 L1499.3,842.0 L1502.4,892.9 L1506.4,918.3 L1510.5,892.9 L1515.6,879.6 L1524.7,912.2 L1529.8,894.9 L1537.1,897.0 L1542.2,913.2 L1546.3,918.3 L1550.3,913.2 L1558.5,870.5 L1563.6,869.5 L1568.6,901.0 L1571.7,909.2 L1580.9,885.8 L1584.9,813.6 L1589.0,833.9 L1594.1,842.0 L1598.1,910.2 L1602.2,916.3 L1612.4,890.9 L1615.4,892.9 L1619.5,920.4 L1624.6,918.3 L1631.7,921.4 L1640.9,890.9 L1644.9,893.9 L1650.0,928.5 L1655.1,926.5 L1660.2,916.3 L1667.3,907.1 L1670.4,911.2 L1675.4,887.8 L1680.5,888.8 L1684.6,906.1 L1689.7,907.1 L1692.7,911.2 L1701.9,865.4 L1706.0,879.7 L1709.0,881.7" fill="none" stroke="url(#vm)" stroke-width="3.4" stroke-linejoin="round" stroke-linecap="round"/><line x1="1197.5" y1="894" x2="1710" y2="894" stroke="#fff" stroke-width="2.3" stroke-dasharray="9.5 4.7"/></svg><div class="a" style="left:427px;width:100px;text-align:right;top:731.85px;height:12.5px;line-height:1;font-size:12.5px;color:#80838f;white-space:nowrap;font-weight:normal">25 MvB</div><div class="a" style="left:427px;width:100px;text-align:right;top:778.85px;height:12.5px;line-height:1;font-size:12.5px;color:#80838f;white-space:nowrap;font-weight:normal">20 MvB</div><div class="a" style="left:427px;width:100px;text-align:right;top:825.75px;height:12.5px;line-height:1;font-size:12.5px;color:#80838f;white-space:nowrap;font-weight:normal">15 MvB</div><div class="a" style="left:427px;width:100px;text-align:right;top:872.75px;height:12.5px;line-height:1;font-size:12.5px;color:#80838f;white-space:nowrap;font-weight:normal">10 MvB</div><div class="a" style="left:427px;width:100px;text-align:right;top:919.75px;height:12.5px;line-height:1;font-size:12.5px;color:#80838f;white-space:nowrap;font-weight:normal">5 MvB</div><div class="a" style="left:427px;width:100px;text-align:right;top:966.25px;height:12.5px;line-height:1;font-size:12.5px;color:#80838f;white-space:nowrap;font-weight:normal">0 MvB</div><div class="a" style="left:1087.5px;width:100px;text-align:right;top:730.75px;height:12.5px;line-height:1;font-size:12.5px;color:#80838f;white-space:nowrap;font-weight:normal">5,000</div><div class="a" style="left:1087.5px;width:100px;text-align:right;top:777.75px;height:12.5px;line-height:1;font-size:12.5px;color:#80838f;white-space:nowrap;font-weight:normal">4,000</div><div class="a" style="left:1087.5px;width:100px;text-align:right;top:824.75px;height:12.5px;line-height:1;font-size:12.5px;color:#80838f;white-space:nowrap;font-weight:normal">3,000</div><div class="a" style="left:1087.5px;width:100px;text-align:right;top:871.55px;height:12.5px;line-height:1;font-size:12.5px;color:#80838f;white-space:nowrap;font-weight:normal">2,000</div><div class="a" style="left:1087.5px;width:100px;text-align:right;top:918.35px;height:12.5px;line-height:1;font-size:12.5px;color:#80838f;white-space:nowrap;font-weight:normal">1,000</div><div class="a" style="left:1087.5px;width:100px;text-align:right;top:964.95px;height:12.5px;line-height:1;font-size:12.5px;color:#80838f;white-space:nowrap;font-weight:normal">0</div><div class="c" style="left:502.4px;width:80px;top:996.5px;height:13px;font-size:13px;color:#878a96;font-weight:normal;">21:45</div><div class="c" style="left:566.7px;width:80px;top:996.5px;height:13px;font-size:13px;color:#a3a5b0;font-weight:bold;">22:00</div><div class="c" style="left:630.9px;width:80px;top:996.5px;height:13px;font-size:13px;color:#878a96;font-weight:normal;">22:15</div><div class="c" style="left:694.1px;width:80px;top:996.5px;height:13px;font-size:13px;color:#878a96;font-weight:normal;">22:30</div><div class="c" style="left:758.4px;width:80px;top:996.5px;height:13px;font-size:13px;color:#878a96;font-weight:normal;">22:45</div><div class="c" style="left:821.3px;width:80px;top:996.5px;height:13px;font-size:13px;color:#a3a5b0;font-weight:bold;">23:00</div><div class="c" style="left:885.9px;width:80px;top:996.5px;height:13px;font-size:13px;color:#878a96;font-weight:normal;">23:15</div><div class="c" style="left:949.0px;width:80px;top:996.5px;height:13px;font-size:13px;color:#878a96;font-weight:normal;">23:30</div><div class="c" style="left:1164.2px;width:80px;top:995.5px;height:13px;font-size:13px;color:#878a96;font-weight:normal;">21:45</div><div class="c" style="left:1228.4px;width:80px;top:995.5px;height:13px;font-size:13px;color:#a3a5b0;font-weight:bold;">22:00</div><div class="c" style="left:1292.7px;width:80px;top:995.5px;height:13px;font-size:13px;color:#878a96;font-weight:normal;">22:15</div><div class="c" style="left:1357.0px;width:80px;top:995.5px;height:13px;font-size:13px;color:#878a96;font-weight:normal;">22:30</div><div class="c" style="left:1421.2px;width:80px;top:995.5px;height:13px;font-size:13px;color:#878a96;font-weight:normal;">22:45</div><div class="c" style="left:1485.5px;width:80px;top:995.5px;height:13px;font-size:13px;color:#a3a5b0;font-weight:bold;">23:00</div><div class="c" style="left:1550.8px;width:80px;top:995.5px;height:13px;font-size:13px;color:#878a96;font-weight:normal;">23:15</div><div class="c" style="left:1615.4px;width:80px;top:995.5px;height:13px;font-size:13px;color:#878a96;font-weight:normal;">23:30</div><div class="a" style="left:2051px;top:971px;width:165px;height:30px;background:#fff;border-radius:2px;box-shadow:0 0 2px rgba(0,0,0,0.3)"></div><svg class="a" style="left:2019px;top:964px" width="40" height="40" viewBox="0 0 40 40"><g transform="rotate(-14 20 20)"><rect x="4" y="4" width="32" height="32" rx="5" fill="#f2551d"/><path d="M29 11 C24 8 12 8 11 14 C10 20 26 18 26 23 C26 28 15 28 10 26" fill="none" stroke="#fff" stroke-width="5.5" stroke-linecap="round"/></g></svg><svg class="a" style="left:2060px;top:973px" width="146" height="26" viewBox="0 0 146 26"><rect x="6.9" y="9" width="13.6" height="6.9" rx="1.6" fill="none" stroke="#1b6fdc" stroke-width="2.3"/><path d="M13.7 5.6 V21.2" stroke="#1b6fdc" stroke-width="2.4" stroke-linecap="round"/><circle cx="39" cy="9" r="2.2" fill="none" stroke="#1a6fdc" stroke-width="1.5"/><path d="M45 13 Q47 14 44 19" stroke="#1a6fdc" stroke-width="2.2" fill="none" stroke-linecap="round"/><rect x="66" y="4" width="6" height="11" rx="3" fill="#1a6fdc"/><path d="M63.5 11 Q63.5 17 69 17 Q74.5 17 74.5 11" stroke="#1a6fdc" stroke-width="1.6" fill="none"/><rect x="68.2" y="17" width="1.6" height="4" fill="#1a6fdc"/><rect x="66" y="20.5" width="6" height="1.5" fill="#1a6fdc"/><rect x="89.5" y="6" width="17" height="13" rx="1.5" fill="none" stroke="#1a6fdc" stroke-width="1.8"/><path d="M92 9.5 h12 M92 12.5 h12 M92 15.5 h12" stroke="#1a6fdc" stroke-width="1.2" stroke-dasharray="1.6 1.1"/><path d="M120 6 L124 4 Q127 7 130 4 L134 6 L137 10 L134 12 L133 11 L133 21 L121 21 L121 11 L120 12 L117 10 Z" fill="#1a6fdc"/></svg>
</body></html>
